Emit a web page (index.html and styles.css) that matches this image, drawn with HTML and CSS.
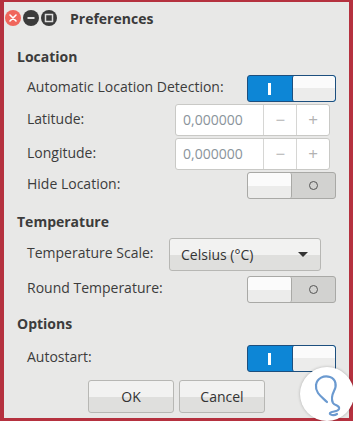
FILE: index.html
```html
<!DOCTYPE html>
<html lang="en">
  <head>
    <meta charset="utf-8">
    <link rel="stylesheet" href="styles.css">
  </head>
  <body>
    <div class="window">
      <div class="titlebar">
        <span class="wbtn close"><svg width="16" height="16" viewBox="0 0 16 16"><path d="M5 5L11 11M11 5L5 11" stroke="#fff" stroke-width="1.6" stroke-linecap="round"/></svg></span>
        <span class="wbtn"><svg width="16" height="16" viewBox="0 0 16 16"><path d="M4.5 8H11.5" stroke="#ddd" stroke-width="2"/></svg></span>
        <span class="wbtn"><svg width="16" height="16" viewBox="0 0 16 16"><rect x="4.5" y="4.5" width="7" height="7" fill="none" stroke="#ddd" stroke-width="1.5"/></svg></span>
        <span class="title">Preferences</span>
      </div>

      <div class="content">
        <div class="heading">Location</div>
        <div class="row r-auto">
          <span class="label">Automatic Location Detection:</span>
          <span class="switch on"><span class="half state"><i class="bar"></i></span><span class="half knob"></span></span>
        </div>
        <div class="row r-spin">
          <span class="label">Latitude:</span>
          <span class="spin"><span class="entry">0,000000</span><span class="sbtn">&minus;</span><span class="sbtn">+</span></span>
        </div>
        <div class="row r-spin">
          <span class="label">Longitude:</span>
          <span class="spin"><span class="entry">0,000000</span><span class="sbtn">&minus;</span><span class="sbtn">+</span></span>
        </div>
        <div class="row r-hide">
          <span class="label">Hide Location:</span>
          <span class="switch off"><span class="half knob"></span><span class="half state"><i class="ring"></i></span></span>
        </div>

        <div class="heading h-temp">Temperature</div>
        <div class="row r-combo">
          <span class="label">Temperature Scale:</span>
          <span class="combo"><span>Celsius (°C)</span><i class="arrow"></i></span>
        </div>
        <div class="row r-round">
          <span class="label">Round Temperature:</span>
          <span class="switch off"><span class="half knob"></span><span class="half state"><i class="ring"></i></span></span>
        </div>

        <div class="heading h-opt">Options</div>
        <div class="row r-autostart">
          <span class="label">Autostart:</span>
          <span class="switch on"><span class="half state"><i class="bar"></i></span><span class="half knob"></span></span>
        </div>
      </div>

      <div class="buttons">
        <span class="btn">OK</span>
        <span class="btn">Cancel</span>
      </div>
    </div>

    <div class="mark">
      <svg width="54" height="54" viewBox="0 0 54 54">
        <path d="M27 35C22 30 15 26 16 18C17 11 24 8 30 10C36 12 37 19 34 24C32 28 31 32 33 36C35 39 40 38 39 42C38 45 32 44 30 46C29 48 34 49 37 47" fill="none" stroke="#6b9ad0" stroke-width="2.2" stroke-linecap="round" stroke-linejoin="round"/>
      </svg>
    </div>
  </body>
</html>
```

FILE: styles.css
```css
* {margin: 0; padding: 0; box-sizing: border-box;}

body {
	background: #b5313f;
	padding: 2px 4px 0 4px;
	font: 14px "Open Sans", "DejaVu Sans", sans-serif;
	color: #3c3c3c;
	height: 421px;
	overflow: hidden;
	position: relative;
}

.window {
	width: 345px;
	height: 416px;
	background: #e8e8e7;
	display: flex;
	flex-direction: column;
}

/* title bar */
.titlebar {
	height: 32px;
	display: flex;
	align-items: center;
	padding-left: 1px;
	gap: 2px;
}
.wbtn {
	width: 16px; height: 16px;
	border-radius: 50%;
	background: #3b3b3b;
	display: block;
}
.wbtn svg {display: block;}
.wbtn.close {background: #f0665c;}
.title {
	font-weight: bold;
	font-size: 14px;
	margin-left: 11px;
	color: #3a3a3a;
}

/* body rows */
.content {
	padding-left: 13px;
	display: flex;
	flex-direction: column;
}
.heading {
	font-weight: bold;
	height: 22px;
	line-height: 22px;
	margin-top: 12px;
}
.h-temp {margin-top: 12px;}
.h-opt {margin-top: 10px;}

.row {
	display: flex;
	align-items: center;
	padding-left: 10px;
}
.label {padding-bottom: 4px; color: #3c3c3c;}
.r-auto {margin-top: 7px;}
.r-spin, .r-hide {margin-top: 2px;}
.r-combo, .r-round {margin-top: 5px;}
.r-autostart {margin-top: 10px;}

/* switches */
.switch {
	margin-left: auto;
	margin-right: 13px;
	width: 89px;
	height: 27px;
	border-radius: 3px;
	display: flex;
	overflow: hidden;
}
.switch .half {
	width: 50%;
	height: 100%;
	display: flex;
	align-items: center;
	justify-content: center;
}
.switch.on {border: 1px solid #1d4f7e; background: #0d86d6;}
.switch.off {border: 1px solid #a9a9a6; background: #d2d2d0;}
.switch .knob {
	background: linear-gradient(#fbfbfb 0 50%, #ececeb 50% 100%);
}
.switch.on .knob {border-left: 1px solid #1d4f7e; border-radius: 2px;}
.switch.off .knob {border-right: 1px solid #a9a9a6; border-radius: 2px;}
.bar {
	display: block;
	width: 3px; height: 12px;
	background: #fff;
}
.ring {
	display: block;
	width: 9px; height: 9px;
	border: 1px solid #555;
	border-radius: 50%;
}

/* spin buttons */
.spin {
	margin-left: auto;
	margin-right: 19px;
	width: 155px;
	height: 32px;
	background: #fff;
	border: 1px solid #c9c9c6;
	border-radius: 3px;
	display: flex;
}
.entry {
	width: 88px;
	padding-left: 7px;
	line-height: 30px;
	color: #8a939b;
}
.sbtn {
	width: 33px;
	border-left: 1px solid #d6d6d4;
	text-align: center;
	line-height: 29px;
	font-size: 17px;
	color: #b2b2b2;
}

/* combo */
.combo {
	margin-left: auto;
	margin-right: 28px;
	width: 152px;
	height: 33px;
	border: 1px solid #b7b7b4;
	border-radius: 3px;
	background: linear-gradient(#f2f2f1 0 50%, #dfdfdd 50% 100%);
	display: flex;
	align-items: center;
	padding: 0 12px 0 11px;
	color: #333;
}
.arrow {
	margin-left: auto;
	width: 0; height: 0;
	border-left: 5px solid transparent;
	border-right: 5px solid transparent;
	border-top: 5px solid #333;
}

/* dialog buttons */
.buttons {
	display: flex;
	justify-content: center;
	gap: 5px;
	margin-top: 8px;
}
.btn {
	width: 86px;
	height: 33px;
	border: 1px solid #b7b7b4;
	border-radius: 3px;
	background: linear-gradient(#f2f2f1 0 50%, #dfdfdd 50% 100%);
	text-align: center;
	line-height: 31px;
	color: #333;
}

/* watermark */
.mark {
	position: absolute;
	left: 300px;
	top: 367px;
	width: 54px;
	height: 54px;
	border-radius: 50%;
	background: #fff;
	box-shadow: 0 0 3px rgba(0,0,0,0.25);
}
.mark svg {display: block;}
```
